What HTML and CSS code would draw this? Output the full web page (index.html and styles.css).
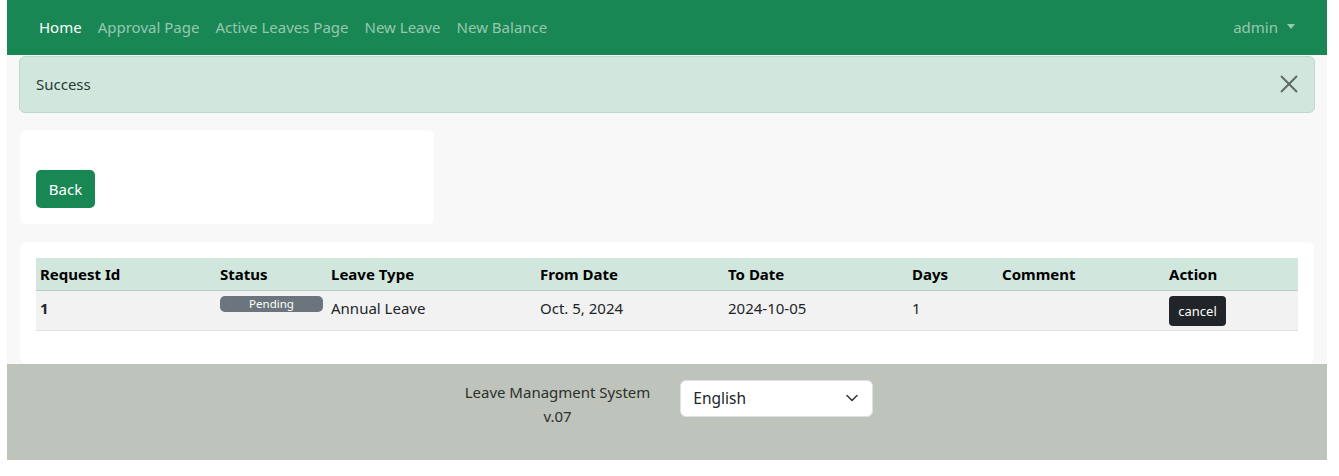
FILE: index.html
```html
<!DOCTYPE html>
<html>
<head>
<meta charset="utf-8">
<link rel="stylesheet" href="styles.css">
</head>
<body>
<div class="wrap">
  <nav class="navbar">
    <div class="nav-links">
      <a class="nav-link active">Home</a>
      <a class="nav-link">Approval Page</a>
      <a class="nav-link">Active Leaves Page</a>
      <a class="nav-link">New Leave</a>
      <a class="nav-link">New Balance</a>
    </div>
    <a class="nav-link user">admin <span class="caret"></span></a>
  </nav>
  <main class="main">
    <div class="alert">
      <span>Success</span>
      <svg class="close" width="18" height="18" viewBox="0 0 18 18"><path d="M1 1 L17 17 M17 1 L1 17" stroke="#5f6a64" stroke-width="2" fill="none"/></svg>
    </div>
    <div class="card small">
      <button class="btn-back">Back</button>
    </div>
    <div class="card wide">
      <table class="table">
        <thead>
          <tr>
            <th class="c1">Request Id</th>
            <th class="c2">Status</th>
            <th class="c3">Leave Type</th>
            <th class="c4">From Date</th>
            <th class="c5">To Date</th>
            <th class="c6">Days</th>
            <th class="c7">Comment</th>
            <th class="c8">Action</th>
          </tr>
        </thead>
        <tbody>
          <tr>
            <td class="bold">1</td>
            <td class="status"><span class="badge">Pending</span></td>
            <td>Annual Leave</td>
            <td>Oct. 5, 2024</td>
            <td>2024-10-05</td>
            <td>1</td>
            <td></td>
            <td><button class="btn-cancel">cancel</button></td>
          </tr>
        </tbody>
      </table>
    </div>
  </main>
  <footer class="footer">
    <div class="foot-text">Leave Managment System<br>v.07</div>
    <div class="select">
      <span>English</span>
      <svg width="12" height="8" viewBox="0 0 12 8"><path d="M1 1.5 L6 6.5 L11 1.5" stroke="#343a40" stroke-width="1.6" fill="none" stroke-linecap="round" stroke-linejoin="round"/></svg>
    </div>
  </footer>
</div>
</body>
</html>
```
FILE: styles.css
```css
* { box-sizing: border-box; }
html, body { margin: 0; padding: 0; background: #fff; }
body {
  font-family: "Noto Sans", "Open Sans", sans-serif;
  font-size: 15px;
  color: #212529;
}
.wrap {
  margin: 0 12px 0 7px;
  background: #f8f8f8;
}
.navbar {
  height: 55px;
  background: #198754;
  display: flex;
  align-items: center;
  justify-content: space-between;
  padding: 0 32px 2px 24px;
}
.nav-links { display: flex; }
.nav-link {
  color: rgba(255,255,255,0.55);
  padding: 0 8px;
  font-size: 15px;
  text-decoration: none;
  line-height: 24px;
  display: flex;
  align-items: center;
}
.nav-link.active { color: #fff; }
.user { padding-right: 0; }
.caret {
  display: inline-block;
  margin-left: 9px;
  border-top: 5px solid rgba(255,255,255,0.55);
  border-left: 4px solid transparent;
  border-right: 4px solid transparent;
}
.main { padding: 1px 12px 0 12px; }
.alert {
  height: 57px;
  background: #d1e7dd;
  border: 1px solid #badbcc;
  border-radius: 6px;
  display: flex;
  align-items: center;
  justify-content: space-between;
  padding: 0 16px 2px 16px;
  color: #283b32;
}
.card {
  background: #fff;
  border-radius: 6px;
  margin-left: 1px;
}
.card.small {
  width: 414px;
  height: 94px;
  margin-top: 17px;
  padding: 40px 16px 0 16px;
}
.card.wide {
  margin-top: 18px;
  margin-right: 1px;
  padding: 16px 16px 33px 16px;
}
.btn-back {
  background: #198754;
  color: #fff;
  border: 0;
  border-radius: 5px;
  height: 38px;
  width: 59px;
  font-family: inherit;
  font-size: 15px;
  padding: 0;
}
.table {
  width: 100%;
  border-collapse: collapse;
}
.table th {
  background: #d1e7dd;
  text-align: left;
  font-weight: 700;
  height: 32px;
  padding: 0 4px;
  border-bottom: 1px solid #b9cbc3;
  color: #000;
}
.table td {
  background: #f2f2f2;
  height: 40px;
  padding: 5px 4px 0 4px;
  line-height: 24px;
  border-bottom: 1px solid #dee2e6;
  vertical-align: top;
}
.c1 { width: 180px; }
.c2 { width: 111px; }
.c3 { width: 209px; }
.c4 { width: 188px; }
.c5 { width: 184px; }
.c6 { width: 90px; }
.c7 { width: 167px; }
.bold { font-weight: 700; }
.badge {
  display: block;
  background: #6c757d;
  color: #fff;
  font-size: 11.5px;
  text-align: center;
  height: 16px;
  line-height: 15px;
  border-radius: 5px;
}
.btn-cancel {
  display: block;
  background: #212529;
  color: #fff;
  border: 0;
  border-radius: 4px;
  height: 30px;
  width: 57px;
  font-family: inherit;
  font-size: 13px;
  padding: 0;
}
.footer {
  background: #bec4bb;
  height: 96px;
  display: flex;
  justify-content: center;
  align-items: flex-start;
  padding-top: 16px;
  gap: 30px;
}
.foot-text {
  text-align: center;
  line-height: 24px;
  font-size: 15px;
  color: #2b302c;
  margin-left: 4px;
}
.select {
  width: 193px;
  height: 37px;
  background: #fff;
  border: 1px solid #dee2e6;
  border-radius: 6px;
  display: flex;
  align-items: center;
  justify-content: space-between;
  padding: 0 14px 0 12px;
  font-size: 15.5px;
}
```
